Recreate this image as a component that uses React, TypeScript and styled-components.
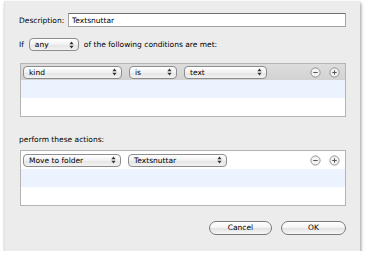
import styled, { createGlobalStyle } from 'styled-components';

const GlobalStyle = createGlobalStyle`
  body {
    margin: 0;
    background: #ffffff;
    font-family: "DejaVu Sans", "Liberation Sans", sans-serif;
    font-size: 7.5px;
    color: #000000;
  }
`;

type Option = { label: string; width: number };

const PopUp = ({ label, width }: Option) => (
  <Popup style={{ width }}>
    <PopupText>{label}</PopupText>
    <Arrows width="5" height="8" viewBox="0 0 5 8">
      <path d="M2.5 0.5 L4.6 3.2 L0.4 3.2 Z" fill="#333" />
      <path d="M2.5 7.5 L4.6 4.8 L0.4 4.8 Z" fill="#333" />
    </Arrows>
  </Popup>
);

const CircleButton = ({ plus }: { plus?: boolean }) => (
  <svg width="11" height="11" viewBox="0 0 11 11">
    <circle cx="5.5" cy="5.5" r="4.6" fill="#f2f2f2" stroke="#8a8a8a" strokeWidth="0.9" />
    <path d="M3.3 5.5 H7.7" stroke="#555" strokeWidth="1" />
    {plus && <path d="M5.5 3.3 V7.7" stroke="#555" strokeWidth="1" />}
  </svg>
);

const App = () => {
  return (
    <>
      <GlobalStyle />
      <Sheet>
        <DescRow>
          <Label>Description:</Label>
          <TextField>Textsnuttar</TextField>
        </DescRow>

        <IfRow>
          <span>If</span>
          <PopUp label="any" width={50} />
          <span>of the following conditions are met:</span>
        </IfRow>

        <RuleBox>
          <RuleRow $tone="header">
            <Popups>
              <PopUp label="kind" width={99} />
              <PopUp label="is" width={48} />
              <PopUp label="text" width={83} />
            </Popups>
            <RowButtons>
              <CircleButton />
              <CircleButton plus />
            </RowButtons>
          </RuleRow>
          <RuleRow $tone="stripe" />
          <RuleRow $tone="plain" />
        </RuleBox>

        <SectionLabel>perform these actions:</SectionLabel>

        <RuleBox>
          <RuleRow $tone="plain">
            <Popups>
              <PopUp label="Move to folder" width={98} />
              <PopUp label="Textsnuttar" width={99} />
            </Popups>
            <RowButtons>
              <CircleButton />
              <CircleButton plus />
            </RowButtons>
          </RuleRow>
          <RuleRow $tone="stripe" />
          <RuleRow $tone="plain" />
        </RuleBox>

        <Footer>
          <PushButton $width={63}>Cancel</PushButton>
          <PushButton $width={65}>OK</PushButton>
        </Footer>
      </Sheet>
    </>
  );
};

export default App;

const Sheet = styled.div`
  box-sizing: border-box;
  width: 356px;
  height: 250px;
  margin: 1px 0 0 4px;
  padding: 12px 14px 0 14px;
  background: #ececec;
  border-left: 1px solid #e2e2e2;
  box-shadow: 1px 2px 3px rgba(0, 0, 0, 0.4);
  display: flex;
  flex-direction: column;
`;

const DescRow = styled.div`
  display: flex;
  align-items: center;
  height: 14px;
`;

const Label = styled.span`
  width: 49px;
  flex-shrink: 0;
`;

const TextField = styled.div`
  flex: 1;
  box-sizing: border-box;
  height: 14px;
  padding: 0 3px;
  line-height: 13px;
  background: #ffffff;
  border: 1px solid #a3a3a3;
  border-top-color: #6e6e6e;
`;

const IfRow = styled.div`
  display: flex;
  align-items: center;
  gap: 5px;
  margin-top: 11px;
  height: 13px;
`;

const Popup = styled.div`
  box-sizing: border-box;
  height: 13px;
  display: flex;
  align-items: center;
  justify-content: space-between;
  padding: 0 4px 0 5px;
  border: 1px solid #8d8d8d;
  border-radius: 4px;
  background: linear-gradient(#ffffff, #f1f1f1 50%, #e4e4e4 51%, #f2f2f2);
  flex-shrink: 0;
`;

const PopupText = styled.span`
  line-height: 11px;
  white-space: nowrap;
`;

const Arrows = styled.svg`
  flex-shrink: 0;
`;

const RuleBox = styled.div`
  margin: 12px 0 0 1px;
  border: 1px solid #b4b4b4;
  background: #ffffff;
  display: flex;
  flex-direction: column;
`;

const rowColors = {
  header: 'linear-gradient(#dddddd, #d2d2d2)',
  stripe: '#edf3fe',
  plain: '#ffffff',
};

const RuleRow = styled.div<{ $tone: keyof typeof rowColors }>`
  height: ${({ $tone }) => ($tone === 'header' ? 16 : 18)}px;
  background: ${({ $tone }) => rowColors[$tone]};
  display: flex;
  align-items: center;
  justify-content: space-between;
  padding: 0 5px 0 2px;
`;

const Popups = styled.div`
  display: flex;
  gap: 7px;
`;

const RowButtons = styled.div`
  display: flex;
  gap: 8px;
`;

const SectionLabel = styled.div`
  margin-top: 18px;
  line-height: 10px;
  & + ${RuleBox} {
    margin-top: 5px;
  }
`;

const Footer = styled.div`
  display: flex;
  justify-content: flex-end;
  gap: 9px;
  margin-top: 15px;
`;

const PushButton = styled.div<{ $width: number }>`
  box-sizing: border-box;
  width: ${({ $width }) => $width}px;
  height: 14px;
  border: 1px solid #7a7a7a;
  border-radius: 7px;
  background: linear-gradient(#ffffff, #f3f3f3 50%, #e2e2e2 51%, #f7f7f7);
  display: flex;
  align-items: center;
  justify-content: center;
  line-height: 12px;
`;
